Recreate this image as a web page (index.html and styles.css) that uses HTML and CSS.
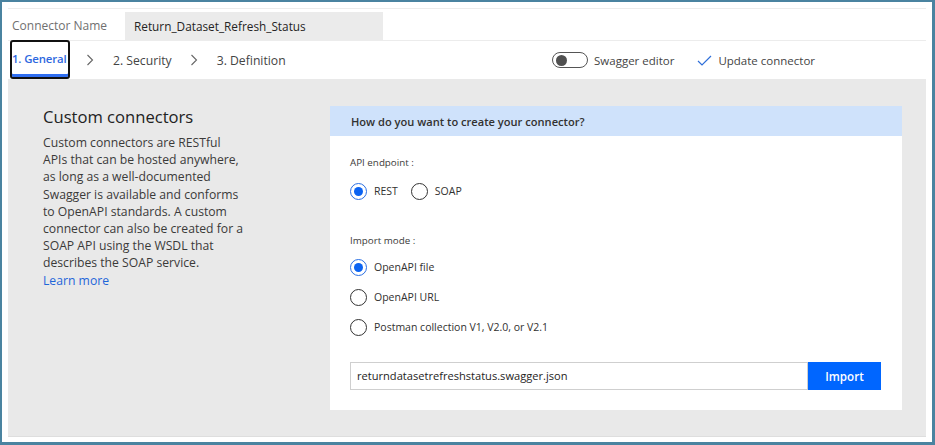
FILE: index.html
```html
<!DOCTYPE html>
<html lang="en">
<head>
    <meta charset="UTF-8">
    <title>Custom connector</title>
    <link rel="stylesheet" href="styles.css">
</head>
<body>

<div class="frame">
    <div class="page">
        <div class="name-row">
            <span class="name-label">Connector Name</span>
            <div class="name-input">Return_Dataset_Refresh_Status</div>
        </div>

        <div class="tab-row">
            <div class="tab active">1. General</div>
            <svg class="chevron" width="8" height="12" viewBox="0 0 8 12"><path d="M1.5 1 L6.5 6 L1.5 11" fill="none" stroke="#666" stroke-width="1.1"/></svg>
            <div class="tab">2. Security</div>
            <svg class="chevron" width="8" height="12" viewBox="0 0 8 12"><path d="M1.5 1 L6.5 6 L1.5 11" fill="none" stroke="#666" stroke-width="1.1"/></svg>
            <div class="tab">3. Definition</div>

            <div class="tab-actions">
                <div class="toggle"><span class="knob"></span></div>
                <span>Swagger editor</span>
                <svg class="check" width="15" height="11" viewBox="0 0 15 11"><path d="M1 6 L5 10 L14 1" fill="none" stroke="#2f6fd9" stroke-width="1.2"/></svg>
                <span>Update connector</span>
            </div>
        </div>

        <div class="content">
            <div class="intro">
                <h2>Custom connectors</h2>
                <p>Custom connectors are RESTful APIs that can be hosted anywhere, as long as a well-documented Swagger is available and conforms to OpenAPI standards. A custom connector can also be created for a SOAP API using the WSDL that describes the SOAP service.<br><a href="#">Learn more</a></p>
            </div>

            <div class="card">
                <div class="card-header">How do you want to create your connector?</div>
                <div class="card-body">
                    <div class="field-label">API endpoint :</div>
                    <div class="radio-line">
                        <label class="radio checked"><span class="dot"></span>REST</label>
                        <label class="radio"><span class="dot"></span>SOAP</label>
                    </div>

                    <div class="field-label second">Import mode :</div>
                    <label class="radio checked stacked"><span class="dot"></span>OpenAPI file</label>
                    <label class="radio stacked"><span class="dot"></span>OpenAPI URL</label>
                    <label class="radio stacked"><span class="dot"></span>Postman collection V1, V2.0, or V2.1</label>

                    <div class="file-row">
                        <div class="file-input">returndatasetrefreshstatus.swagger.json</div>
                        <button class="import-btn">Import</button>
                    </div>
                </div>
            </div>
        </div>
    </div>
</div>

</body>
</html>
```

FILE: styles.css
```css
body {
    margin: 0;
    font-family: 'Open Sans', 'Liberation Sans', sans-serif;
    color: #323130;
    background: #ffffff;
}

.frame {
    width: 935px;
    height: 445px;
    box-sizing: border-box;
    border: 2px solid #4a83a0;
    border-right-width: 3px;
    border-bottom-width: 3px;
    padding: 6px 6px 6px 6px;
}

.page {
    height: 100%;
    display: flex;
    flex-direction: column;
    border-top: 1px solid #ececec;
}

.name-row {
    height: 31px;
    display: flex;
    align-items: flex-end;
    border-bottom: 1px solid #ececec;
}

.name-label {
    width: 117px;
    padding-left: 4px;
    box-sizing: border-box;
    font-size: 12px;
    color: #707070;
    line-height: 28px;
}

.name-input {
    width: 258px;
    height: 28px;
    box-sizing: border-box;
    background-color: #ebebeb;
    padding-left: 9px;
    font-size: 11.8px;
    line-height: 28px;
    color: #252423;
}

.tab-row {
    height: 38px;
    display: flex;
    align-items: center;
    font-size: 12.2px;
    color: #444;
}

.tab {
    padding: 0 2px;
}

.tab.active {
    box-sizing: border-box;
    width: 60px;
    height: 39px;
    margin-left: 2px;
    padding: 0;
    border: 2px solid #111;
    border-radius: 3px;
    line-height: 33px;
    color: #2e68e0;
    font-weight: 600;
    font-size: 11.4px;
    letter-spacing: -0.15px;
    white-space: nowrap;
    box-shadow: inset 0 -3px 0 #2f6ef0;
    align-self: flex-start;
    margin-top: -1px;
}

.chevron {
    margin: 0 17px 0 16px;
}

.tab-actions {
    margin-left: auto;
    margin-right: 111px;
    display: flex;
    align-items: center;
    font-size: 11.5px;
    color: #444;
}

.toggle {
    width: 31px;
    height: 14px;
    border: 1.5px solid #555;
    border-radius: 10px;
    display: flex;
    align-items: center;
    padding-left: 3px;
    margin-right: 6px;
    box-sizing: content-box;
}

.knob {
    width: 11px;
    height: 11px;
    border-radius: 50%;
    background-color: #505050;
}

.check {
    margin: 0 6px 0 23px;
}

.content {
    flex: 1;
    background-color: #e9e9e9;
    display: flex;
    padding: 27px 24px 0 35px;
    border-bottom: 1px solid #dedede;
}

.intro {
    width: 287px;
}

.intro h2 {
    margin: -1px 0 6px 0;
    font-size: 16.6px;
    font-weight: 400;
    color: #222;
}

.intro p {
    width: 202px;
    margin: 0;
    font-size: 12.2px;
    line-height: 17.2px;
    color: #3b3a39;
}

.intro a {
    color: #1f66d9;
    text-decoration: none;
}

.card {
    width: 572px;
    height: 304px;
    background-color: #ffffff;
}

.card-header {
    height: 30px;
    background-color: #cfe2fb;
    padding-left: 21px;
    font-size: 11.1px;
    font-weight: 600;
    line-height: 32px;
    color: #323130;
}

.card-body {
    padding: 17px 20px 0 20px;
    font-size: 10.5px;
}

.field-label {
    line-height: 20px;
    font-size: 9.8px;
    color: #3b3a39;
}

.field-label.second {
    margin-top: 30px;
}

.radio-line {
    display: flex;
    margin-top: 8px;
}

.radio {
    display: flex;
    align-items: center;
    height: 20px;
    margin-right: 13px;
    font-size: 10.5px;
    color: #323130;
}

.radio .dot {
    width: 17px;
    height: 17px;
    box-sizing: border-box;
    border: 1.3px solid #333;
    border-radius: 50%;
    margin-right: 7px;
    display: flex;
    align-items: center;
    justify-content: center;
}

.radio.checked .dot {
    border-color: #2b6fe3;
}

.radio.checked .dot::after {
    content: "";
    width: 9px;
    height: 9px;
    border-radius: 50%;
    background-color: #0b63f2;
}

.radio.stacked {
    margin-top: 10px;
}

.field-label.second + .radio.stacked {
    margin-top: 6px;
}

.file-row {
    display: flex;
    margin-top: 25px;
}

.file-input {
    width: 458px;
    height: 28px;
    box-sizing: border-box;
    border: 1px solid #cfcfcf;
    padding-left: 6px;
    font-size: 11.1px;
    line-height: 26px;
    color: #252423;
}

.import-btn {
    width: 73px;
    height: 28px;
    border: none;
    background-color: #0066ff;
    color: #ffffff;
    font-family: 'Open Sans', 'Liberation Sans', sans-serif;
    font-size: 11.6px;
    font-weight: 600;
}
```
